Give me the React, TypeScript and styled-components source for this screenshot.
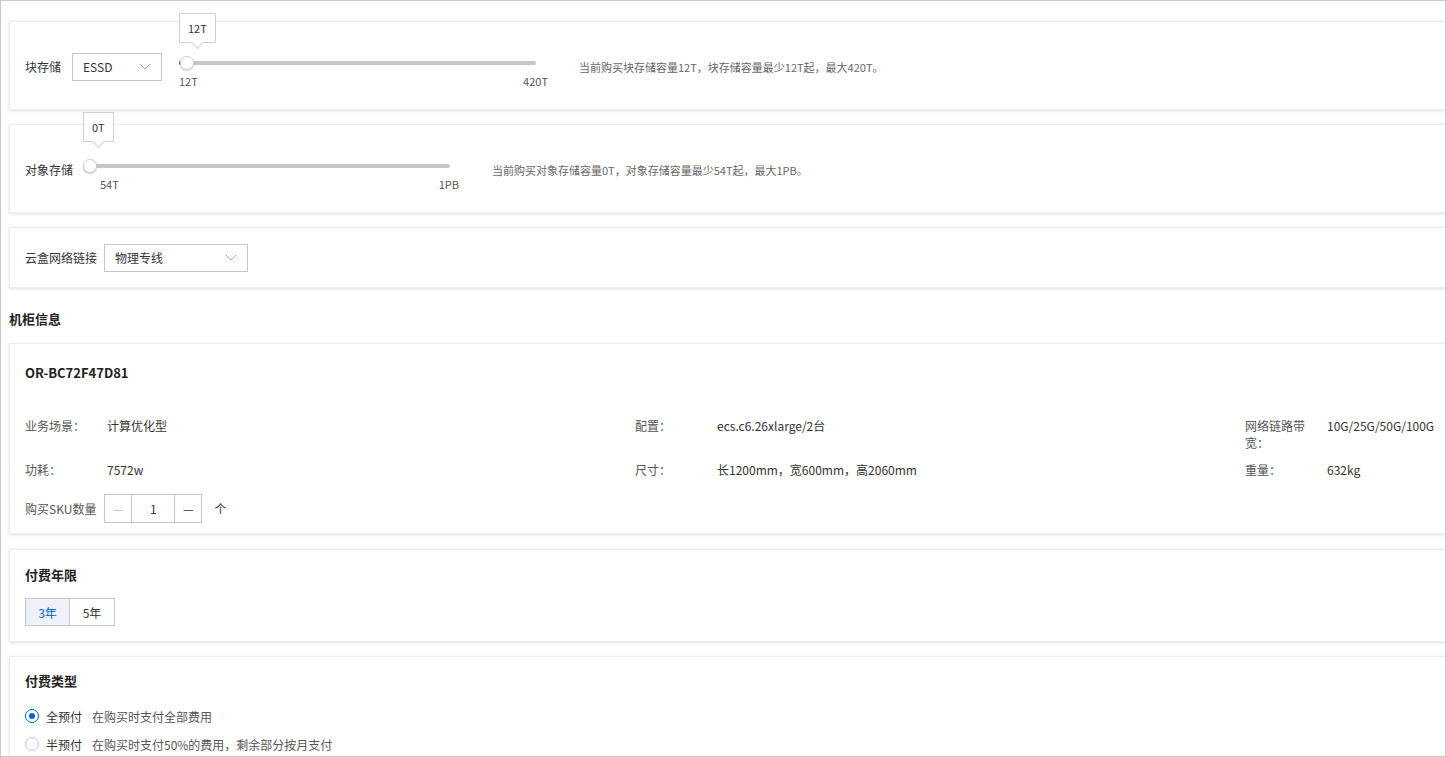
import React from "react";
import styled, { createGlobalStyle } from "styled-components";

const G = createGlobalStyle`
  body { margin: 0; font-family: "Noto Sans CJK SC", "Noto Sans", sans-serif; color: #333; font-size: 12px; }
`;
const Page = styled.div`
  width: 1446px; height: 757px; box-sizing: border-box; border: 1px solid #c8c8c8;
  overflow: hidden; padding: 20px 0 0 8px; background: #fff;
`;
const Card = styled.div<{ h?: number; mt?: number }>`
  position: relative; width: 1450px; box-sizing: border-box;
  height: ${p => (p.h ? p.h + "px" : "auto")};
  margin-top: ${p => p.mt ?? 0}px;
  background: #fff; border: 1px solid #ececec; box-shadow: 0 1px 3px rgba(0,0,0,0.12);
  padding: 0 15px;
`;
const Row = styled.div<{ h: number }>`
  display: flex; align-items: center; height: ${p => p.h}px;
`;
const Label = styled.span<{ w: number }>` width: ${p => p.w}px; flex: none; color: #333; `;
const Select = styled.div<{ w: number }>`
  width: ${p => p.w}px; height: 28px; box-sizing: border-box; border: 1px solid #c6c6c6;
  display: flex; align-items: center; justify-content: space-between; padding: 0 10px; color: #333;
`;
const Slider = styled.div<{ w: number; ml: number }>`
  position: relative; width: ${p => p.w}px; margin-left: ${p => p.ml}px; height: 40px; flex: none;
`;
const Track = styled.div`
  position: absolute; left: 0; right: 0; top: 14px; height: 4px; border-radius: 2px; background: #c3c6cc;
`;
const Fill = styled.div` position: absolute; left: 0; top: 14px; width: 4px; height: 4px; background: #0064c8; border-radius: 2px; `;
const Thumb = styled.div<{ l: number }>`
  position: absolute; left: ${p => p.l}px; top: 9px; width: 14px; height: 14px; border-radius: 50%;
  background: #fff; border: 1px solid #d0d0d0; box-sizing: border-box; box-shadow: 0 1px 2px rgba(0,0,0,0.2);
`;
const Tick = styled.span<{ l?: number; r?: number }>`
  position: absolute; top: 26px; color: #555; font-size: 11px;
  ${p => (p.l !== undefined ? `left:${p.l}px;` : `right:${p.r}px;`)}
`;
const Tip = styled.div<{ l: number; t: number }>`
  position: absolute; left: ${p => p.l}px; top: ${p => p.t}px; height: 28px; padding: 0 8px;
  border: 1px solid #d0d0d0; background: #fff; display: flex; align-items: center; font-size: 11px; color: #333;
  &::after { content: ""; position: absolute; left: 50%; bottom: -5px; width: 8px; height: 8px; margin-left: -4px;
    background: #fff; border-right: 1px solid #d0d0d0; border-bottom: 1px solid #d0d0d0; transform: rotate(45deg); }
`;
const Hint = styled.span<{ ml: number }>` margin-left: ${p => p.ml}px; color: #666; font-size: 11px; `;
const Section = styled.div` font-weight: bold; font-size: 13px; color: #222; padding: 21px 0 15px 0; `;
const Title = styled.div<{ pt: number; pb: number }>`
  font-weight: bold; font-size: 13px; color: #222; padding: ${p => p.pt}px 0 ${p => p.pb}px;
`;
const Info = styled.div` display: grid; grid-template-columns: 610px 610px 200px; row-gap: 0; `;
const Cell = styled.div` display: flex; height: 44px; color: #333; `;
const Key = styled.span` width: 82px; flex: none; color: #555; `;
const Stepper = styled.div` display: flex; margin-left: 8px; `;
const StepBtn = styled.div<{ dim?: boolean }>`
  width: 28px; height: 29px; box-sizing: border-box; border: 1px solid #c6c6c6; display: flex; align-items: center;
  justify-content: center; color: ${p => (p.dim ? "#bbb" : "#333")};
`;
const StepInput = styled(StepBtn)` width: 44px; margin: 0 -1px 0 -1px; `;
const Tabs = styled.div` display: flex; `;
const Tab = styled.div<{ on?: boolean }>`
  width: 45px; height: 28px; box-sizing: border-box; border: 1px solid #c6c6c6; display: flex; align-items: center;
  justify-content: center; background: ${p => (p.on ? "#eef2f8" : "#fff")}; color: ${p => (p.on ? "#0064c8" : "#333")};
  & + & { border-left: none; }
`;
const Radio = styled.div` display: flex; align-items: center; height: 28px; `;
const Circle = styled.span<{ on?: boolean }>`
  width: 14px; height: 14px; border-radius: 50%; box-sizing: border-box; border: 1px solid ${p => (p.on ? "#0064c8" : "#c6c6c6")};
  display: flex; align-items: center; justify-content: center; margin-right: 7px;
  &::after { content: ""; width: 6px; height: 6px; border-radius: 50%; background: ${p => (p.on ? "#0064c8" : "transparent")}; }
`;
const RText = styled.span` width: 46px; color: #333; `;
const RDesc = styled.span` color: #555; `;
const Chev = () => (
  <svg width="12" height="8" viewBox="0 0 12 8"><path d="M1 1l5 5 5-5" fill="none" stroke="#aaa" /></svg>
);

export default function App() {
  return (
    <Page>
      <G />
      <Card h={89}>
        <Row h={89}>
          <Label w={47}>块存储</Label>
          <Select w={90}>ESSD<Chev /></Select>
          <Slider w={357} ml={17}>
            <Track /><Fill /><Thumb l={1} />
            <Tick l={0}>12T</Tick><Tick r={-12}>420T</Tick>
          </Slider>
          <Hint ml={43}>当前购买块存储容量12T，块存储容量最少12T起，最大420T。</Hint>
        </Row>
        <Tip l={169} t={-9}>12T</Tip>
      </Card>
      <Card h={89} mt={14}>
        <Row h={89}>
          <Label w={64}>对象存储</Label>
          <Slider w={361} ml={0}>
            <Track /><Thumb l={-6} />
            <Tick l={11}>54T</Tick><Tick r={-9}>1PB</Tick>
          </Slider>
          <Hint ml={42}>当前购买对象存储容量0T，对象存储容量最少54T起，最大1PB。</Hint>
        </Row>
        <Tip l={73} t={-13}>0T</Tip>
      </Card>
      <Card h={61} mt={14}>
        <Row h={59}>
          <Label w={79}>云盒网络链接</Label>
          <Select w={144}>物理专线<Chev /></Select>
        </Row>
      </Card>
      <Section>机柜信息</Section>
      <Card h={191}>
        <Title pt={19} pb={35}>OR-BC72F47D81</Title>
        <Info>
          <Cell><Key>业务场景：</Key>计算优化型</Cell>
          <Cell><Key>配置：</Key>ecs.c6.26xlarge/2台</Cell>
          <Cell><Key style={{ width: 70, marginRight: 12 }}>网络链路带宽：</Key>10G/25G/50G/100G</Cell>
          <Cell style={{ height: 32 }}><Key>功耗：</Key>7572w</Cell>
          <Cell style={{ height: 32 }}><Key>尺寸：</Key>长1200mm，宽600mm，高2060mm</Cell>
          <Cell style={{ height: 32 }}><Key>重量：</Key>632kg</Cell>
        </Info>
        <Row h={30}>
          <span style={{ color: "#555" }}>购买SKU数量</span>
          <Stepper>
            <StepBtn dim>—</StepBtn><StepInput>1</StepInput><StepBtn>—</StepBtn>
          </Stepper>
          <span style={{ marginLeft: 12 }}>个</span>
        </Row>
      </Card>
      <Card h={93} mt={15}>
        <Title pt={15} pb={14}>付费年限</Title>
        <Tabs><Tab on>3年</Tab><Tab>5年</Tab></Tabs>
      </Card>
      <Card h={140} mt={14}>
        <Title pt={14} pb={12}>付费类型</Title>
        <Radio><Circle on /><RText>全预付</RText><RDesc>在购买时支付全部费用</RDesc></Radio>
        <Radio><Circle /><RText>半预付</RText><RDesc>在购买时支付50%的费用，剩余部分按月支付</RDesc></Radio>
      </Card>
    </Page>
  );
}
